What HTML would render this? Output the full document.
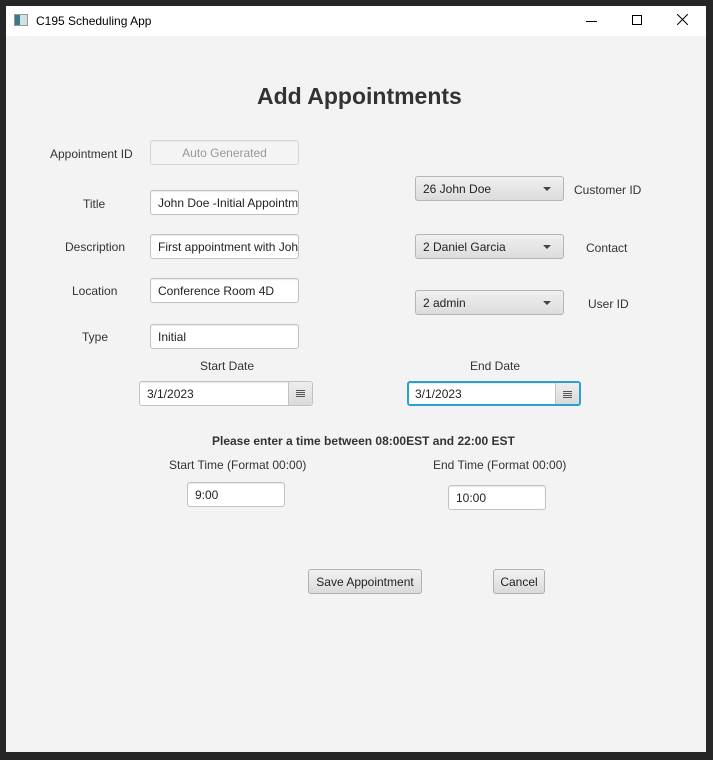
<!DOCTYPE html>
<html><head><meta charset="utf-8"><style>
*{box-sizing:border-box;margin:0;padding:0}
body{width:713px;height:760px;background:#262626;position:relative;overflow:hidden;font-family:"Liberation Sans",sans-serif;font-size:12px;color:#333}
.win{position:absolute;left:6px;top:6px;width:700px;height:746px;background:#f3f3f3}
.tb{position:absolute;left:0;top:0;width:700px;height:30px;background:#fff;color:#000}
.a{position:absolute;white-space:nowrap}
.tf{position:absolute;height:25px;background:#fff;border:1px solid #c2c2c2;border-radius:3px;padding:0 7px;line-height:24px;color:#222;overflow:hidden;white-space:nowrap;box-shadow:inset 0 1px 1px #e8e8e8}
.cb{position:absolute;height:25px;width:149px;border:1px solid #b5b5b5;border-radius:3px;background:linear-gradient(#f0f0f0,#dcdcdc);padding:0 7px;line-height:24px;color:#222}
.cb:after{content:"";position:absolute;right:12px;top:10px;border-left:4px solid transparent;border-right:4px solid transparent;border-top:4px solid #444}
.btn{position:absolute;height:25px;border:1px solid #b0b0b0;border-radius:3px;background:linear-gradient(#f2f2f2,#dadada);line-height:24px;text-align:center;color:#222}
.cal{position:absolute;top:0;right:0;width:24px;height:100%;border-left:1px solid #c2c2c2;background:linear-gradient(#eee,#dadada)}
.cal:after{content:"";position:absolute;left:7px;top:8px;width:9px;height:7px;background:repeating-linear-gradient(90deg,#555 0 2px,transparent 2px 3px),#555;-webkit-mask:repeating-linear-gradient(#000 0 1px,transparent 1px 2px)}
</style></head><body>
<div class="win">
 <div class="tb">
  <div class="a" style="left:8px;top:8px;width:14px;height:12px;border:1px solid #999;background:linear-gradient(90deg,#3a7a8a 0 40%,#cfe0e6 40%)"></div>
  <div class="a" style="left:30px;top:8px;font-size:12px">C195 Scheduling App</div>
  <div class="a" style="left:580px;top:15px;width:11px;height:1px;background:#000"></div>
  <div class="a" style="left:626px;top:9px;width:10px;height:10px;border:1px solid #000"></div>
  <svg class="a" style="left:671px;top:8px" width="11" height="11"><path d="M0 0L11 11M11 0L0 11" stroke="#000" stroke-width="1"/></svg>
 </div>
 <div class="a" style="left:251px;top:77px;font-size:23px;font-weight:bold;color:#333">Add Appointments</div>

 <div class="a" style="left:44px;top:141px">Appointment ID</div>
 <div class="tf" style="left:144px;top:134px;width:149px;background:#f4f4f4;color:#999;text-align:center;border-color:#d6d6d6">Auto Generated</div>
 <div class="a" style="left:77px;top:191px">Title</div>
 <div class="tf" style="left:144px;top:184px;width:149px">John Doe -Initial Appointment</div>
 <div class="a" style="left:59px;top:234px">Description</div>
 <div class="tf" style="left:144px;top:228px;width:149px">First appointment with John</div>
 <div class="a" style="left:66px;top:278px">Location</div>
 <div class="tf" style="left:144px;top:272px;width:149px">Conference Room 4D</div>
 <div class="a" style="left:76px;top:324px">Type</div>
 <div class="tf" style="left:144px;top:318px;width:149px">Initial</div>

 <div class="cb" style="left:409px;top:170px">26 John Doe</div>
 <div class="a" style="left:568px;top:177px">Customer ID</div>
 <div class="cb" style="left:409px;top:228px">2 Daniel Garcia</div>
 <div class="a" style="left:580px;top:235px">Contact</div>
 <div class="cb" style="left:409px;top:284px">2 admin</div>
 <div class="a" style="left:582px;top:291px">User ID</div>

 <div class="a" style="left:194px;top:353px">Start Date</div>
 <div class="tf" style="left:133px;top:375px;width:174px">3/1/2023<div class="cal"></div></div>
 <div class="a" style="left:464px;top:353px">End Date</div>
 <div class="tf" style="left:401px;top:375px;width:174px;border:2px solid #2aa0d6;line-height:22px;padding-left:6px">3/1/2023<div class="cal"></div></div>

 <div class="a" style="left:206px;top:428px;font-weight:bold;color:#333">Please enter a time between 08:00EST and 22:00 EST</div>
 <div class="a" style="left:163px;top:452px">Start Time (Format 00:00)</div>
 <div class="a" style="left:427px;top:452px">End Time (Format 00:00)</div>
 <div class="tf" style="left:181px;top:476px;width:98px">9:00</div>
 <div class="tf" style="left:442px;top:479px;width:98px">10:00</div>

 <div class="btn" style="left:302px;top:563px;width:114px">Save Appointment</div>
 <div class="btn" style="left:487px;top:563px;width:52px">Cancel</div>
</div>
</body></html>
